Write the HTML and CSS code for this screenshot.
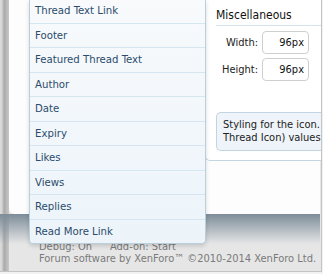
FILE: index.html
```html
<!DOCTYPE html>
<html>
<head>
<meta charset="utf-8">
<link rel="stylesheet" href="styles.css">
</head>
<body>
<div class="frame">
  <div class="content">
    <div class="left-col"></div>
    <div class="panel">
      <h3 class="panel-title">Miscellaneous</h3>
      <div class="field">
        <label class="field-label">Width:</label>
        <input class="field-input" type="text" value="96px">
      </div>
      <div class="field">
        <label class="field-label">Height:</label>
        <input class="field-input" type="text" value="96px">
      </div>
      <div class="explain">Styling for the icon. (Same as<br>Thread Icon) values</div>
    </div>
    <ul class="menu">
      <li class="menu-item">Thread Text Link</li>
      <li class="menu-item">Footer</li>
      <li class="menu-item">Featured Thread Text</li>
      <li class="menu-item">Author</li>
      <li class="menu-item">Date</li>
      <li class="menu-item">Expiry</li>
      <li class="menu-item">Likes</li>
      <li class="menu-item">Views</li>
      <li class="menu-item">Replies</li>
      <li class="menu-item">Read More Link</li>
    </ul>
  </div>
  <div class="footer">
    <div class="footer-line"><span class="debug">Debug: On</span><span>Add-on: Start</span></div>
    <div class="footer-line">Forum software by XenForo™ ©2010-2014 XenForo Ltd.</div>
  </div>
</div>
</body>
</html>
```
FILE: styles.css
```css
html, body {
  margin: 0;
  padding: 0;
}
body {
  width: 323px;
  height: 274px;
  overflow: hidden;
  background: #f1f1f1;
  font-family: "DejaVu Sans", sans-serif;
  font-stretch: condensed;
  font-size: 11px;
}
.frame {
  position: relative;
  width: 321px;
  height: 271px;
  border-right: 1px solid #c4c4c4;
  border-bottom: 1px solid #c4c4c4;
  background: linear-gradient(to right, #dcdcdc 0, #d4d4d4 2px, #a9a9a9 4px, #c8c8c8 9px, #e6e6e6 9px);
  overflow: hidden;
}
.content {
  position: relative;
  margin-left: 9px;
  width: 311px;
  height: 214px;
  background: #fdfdfe;
  border-bottom-left-radius: 6px;
  display: flex;
}
.content::after {
  content: "";
  position: absolute;
  left: -9px;
  right: 0;
  top: 100%;
  height: 30px;
  background: linear-gradient(#7d8d99, rgba(230,230,230,0));
  z-index: 0;
}
.left-col {
  width: 196px;
  flex: none;
}
.panel {
  flex: 1;
  align-self: flex-start;
  background: #fff;
  border: 1px solid #c5d6e3;
  border-top: none;
  border-right: none;
  border-bottom-left-radius: 5px;
  padding: 0 0 9px 10px;
  color: #222;
}
.panel-title {
  margin: 0;
  padding-top: 8px;
  height: 17px;
  line-height: 14px;
  font-size: 12px;
  font-weight: normal;
  color: #111;
  border-bottom: 1px solid #d5e3ed;
}
.field {
  display: flex;
  align-items: center;
  gap: 4px;
  margin-top: 5px;
}
.field + .field {
  margin-top: 4px;
}
.field-label {
  width: 42px;
  text-align: right;
  color: #222;
}
.field-input {
  box-sizing: border-box;
  width: 47px;
  height: 23px;
  border: 1px solid #cfcfcf;
  border-radius: 4px;
  background: #fff;
  text-align: right;
  padding: 0 4px 0 0;
  font: inherit;
  font-size: 11px;
  color: #111;
  margin: 0;
}
.explain {
  margin-top: 31px;
  box-sizing: border-box;
  height: 39px;
  padding: 5px 6px;
  line-height: 13px;
  background: #eef4f9;
  border: 1px solid #c2d4e2;
  border-right: none;
  border-radius: 5px 0 0 5px;
  white-space: nowrap;
  overflow: hidden;
  color: #222;
}
.menu {
  position: absolute;
  left: 20px;
  top: 0;
  width: 177px;
  box-sizing: border-box;
  margin: 0;
  padding: 0;
  list-style: none;
  background: linear-gradient(#f8fafc, #ecf4fa);
  border: 1px solid #b9cfde;
  border-top: none;
  border-bottom-left-radius: 4px;
  border-bottom-right-radius: 4px;
  box-shadow: 0 2px 4px rgba(0,0,0,0.15);
  z-index: 2;
}
.menu-item {
  height: 23.5px;
  line-height: 23.5px;
  padding-left: 5px;
  border-bottom: 1px solid #d6e6f1;
  color: #2b4c6c;
  font-size: 11.3px;
  white-space: nowrap;
}
.menu-item:first-child {
  height: 22.5px;
  line-height: 21px;
}
.menu-item:last-child {
  border-bottom: none;
}
.footer {
  position: relative;
  z-index: 1;
  margin-top: 27px;
  padding-left: 39px;
  color: #7a7a7a;
  line-height: 12px;
}
.footer-line {
  white-space: nowrap;
}
.debug {
  display: inline-block;
  width: 71px;
}
```
